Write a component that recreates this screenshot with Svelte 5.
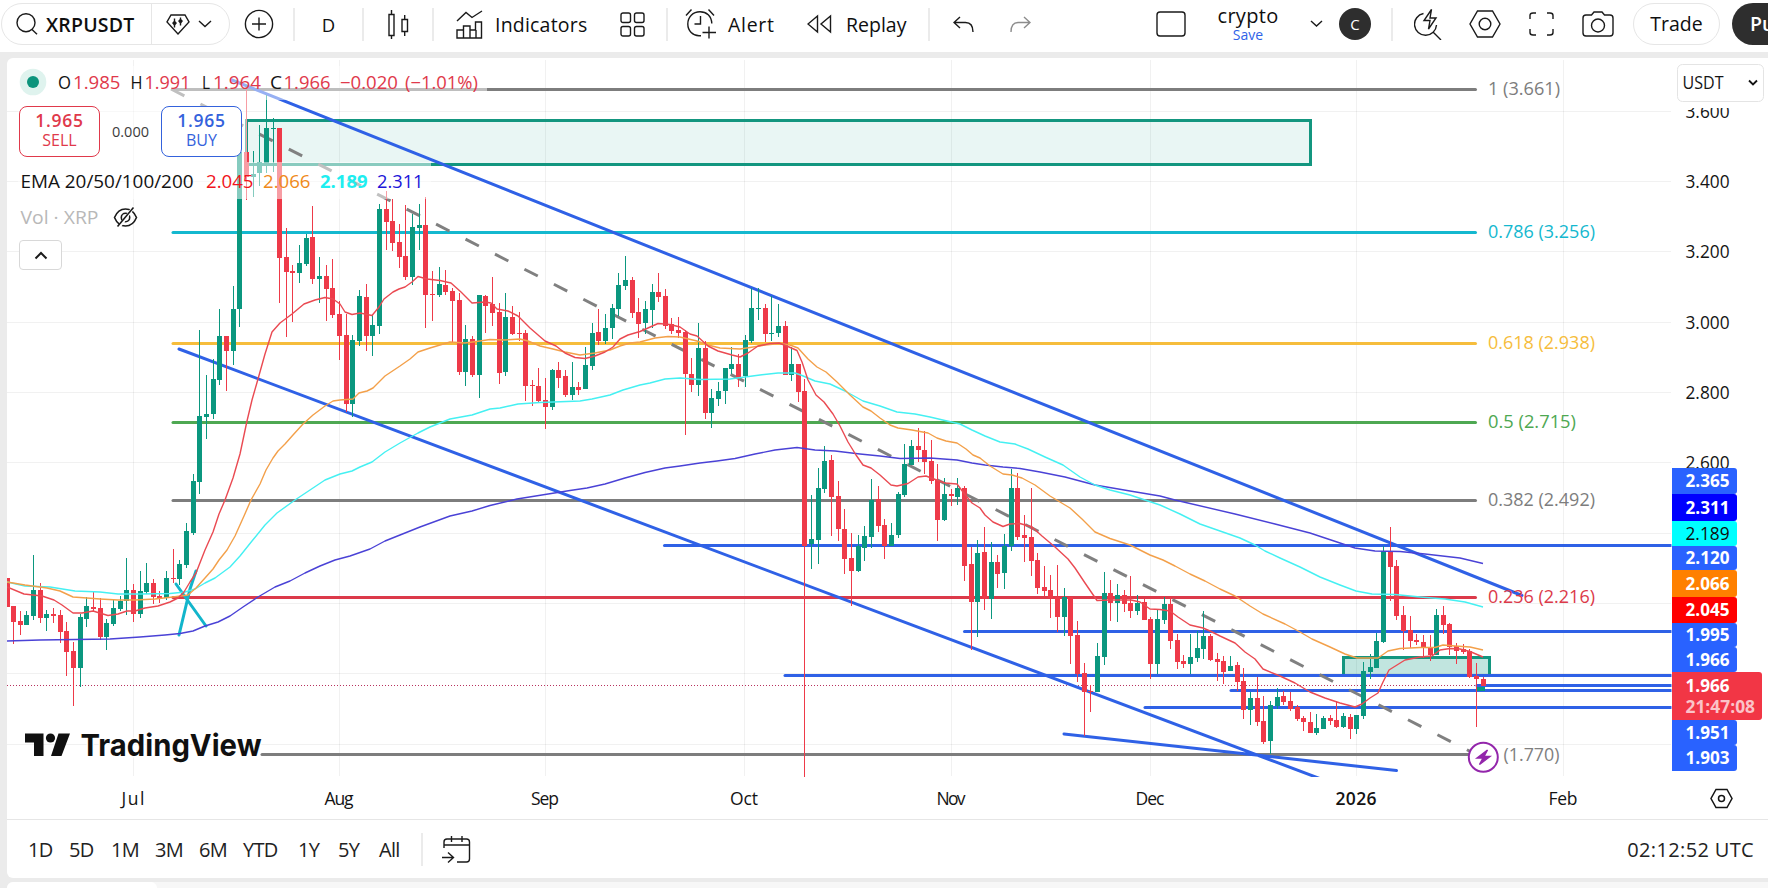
<script>
  const dayWidth = 6.6495;
  const firstDay = 7.02;

  // one entry per day: direction, high, body top, body bottom, low
  const series = `
    r578,578,607,607 r606,606,622,644 r611,621,625,635 g611,615,625,625 g555,590,616,620 r583,590,618,623 g610,614,618,631
    r608,614,616,623 r610,615,632,643 r622,631,652,676 r642,651,668,706 g614,617,668,687 g597,606,619,627 r592,607,609,612
    r598,608,637,640 g619,623,637,650 g600,608,624,626 g596,601,609,611 g558,590,601,615 r584,590,614,622 g571,591,614,618
    g563,583,592,594 r579,583,597,604 r591,596,598,603 g571,578,598,600 r549,578,579,583 g560,564,579,585 g523,531,565,568
    g474,481,533,535 g330,416,482,494 g375,414,417,439 g359,379,414,419 g309,336,380,385 r336,336,351,391 g286,309,351,365
    g152,152,309,327 r90,152,177,200 g151,174,177,197 g125,162,173,186 g95,128,163,173 g118,128,129,172 r128,128,258,303
    r228,257,272,337 r265,271,273,322 g245,263,273,283 g234,238,264,266 r206,237,279,284 g257,276,279,303 r265,276,289,321
    r259,288,315,318 r301,314,336,360 r314,335,404,412 g335,340,404,417 g290,296,341,346 r284,297,336,351 g315,325,336,356
    g204,209,326,334 r191,209,222,250 r199,221,243,251 r224,242,257,268 r205,256,277,280 g214,227,277,285 g204,225,228,250
    r197,225,295,328 r271,294,295,321 g267,284,295,297 r270,285,292,295 r288,291,301,343 r293,300,372,375 g325,339,372,386
    r336,339,375,377 g295,295,375,398 r295,296,306,333 r277,304,313,326 r303,312,373,384 g293,317,372,376 r306,317,334,335
    r312,333,334,341 r330,333,386,401 r380,385,386,406 r368,386,401,402 r378,400,407,429 g369,370,407,410 r362,370,378,388
    r370,376,395,397 g362,387,395,400 r382,387,390,395 g347,365,389,389 g323,333,366,370 r309,332,341,345 g314,328,341,344
    g304,308,328,339 g273,285,309,316 g256,280,286,290 r277,280,313,318 r298,312,324,338 g301,309,323,334 g284,292,310,328
    r273,292,297,302 r289,296,326,329 r318,324,331,334 r317,330,333,338 r330,332,374,435 r358,374,385,392 g323,348,385,396
    r341,348,413,419 g389,398,413,428 g382,391,399,406 g368,368,391,404 g347,364,369,374 r354,364,377,387 g335,340,376,387
    g288,308,341,343 g288,308,309,320 r304,308,334,342 g296,333,334,341 g304,326,333,337 r321,326,375,375 g347,364,375,381
    r364,364,392,402 r379,391,546,777 g495,539,544,569 g468,488,540,564 g446,461,489,493 r455,460,497,536 r481,496,529,541
    r509,529,559,574 r533,558,571,606 g535,546,571,572 g526,536,548,561 g479,500,537,548 r486,499,526,532 r519,525,546,559
    g523,535,546,546 g492,494,535,538 g444,464,495,497 g440,446,465,465 r428,446,450,462 r431,450,462,474 r440,461,481,484
    r464,480,520,541 g478,494,520,521 r489,494,496,506 g478,488,497,505 r486,488,566,581 r547,564,602,650 g540,553,602,637
    r527,552,599,610 g542,562,599,619 r555,562,574,588 g534,546,573,589 g469,488,546,551 r473,488,537,540 r515,535,538,562
    r488,537,561,576 r553,560,588,594 r566,587,591,596 r575,590,598,618 r565,597,617,632 g588,597,617,636 r597,597,636,664
    r621,635,674,682 r663,673,692,736 r685,691,692,712 g643,656,692,692 g572,593,657,665 r580,593,603,621 g584,595,603,622
    r590,595,604,612 r576,603,611,618 g595,603,611,615 r599,602,620,620 r617,619,664,679 g609,619,664,674 g597,604,620,624
    r597,604,641,649 r634,640,662,669 r655,661,664,668 g634,657,664,674 g631,648,658,662 g611,636,649,659 r634,636,660,661
    r653,659,662,681 r656,661,672,684 g656,666,671,671 r662,665,682,691 r668,681,710,719 g692,698,710,725 r677,698,722,726
    r696,721,742,744 g701,705,741,754 g688,697,706,709 r691,696,702,705 r692,701,709,711 r705,707,719,721 r716,718,722,731
    r712,722,733,733 g714,728,733,735 g716,718,729,729 r715,718,721,725 r701,720,727,728 g713,716,727,728 r714,717,729,739
    g715,715,729,734 g662,671,716,719 g654,667,672,679 g633,641,668,668 g546,551,642,643 r527,551,567,601 r560,566,616,620
    r606,615,631,650 r616,630,641,648 r634,640,642,645 r635,642,648,658 r635,647,655,661 g609,615,655,655 r606,615,625,634
    r623,624,647,655 r643,646,651,664 r644,649,652,654 r649,651,677,678 r663,676,679,727 r677,679,686,686`;

  const candles = series.trim().split(/\s+/).map((entry, i) => {
    const [high, top, bottom, low] = entry.slice(1).split(',').map(Number);
    return { up: entry[0] === 'g', x: Math.floor(firstDay + i * dayWidth), high, top, bottom, low };
  });

  const averages = [
    { color: '#4a42d6', points: '7,641 40,640 75,639.5 110,639 140,637 165,635 180,633.5 193,631 205,626 218,622 230,616 243,607 258,597 275,587 290,581 305,573 320,566 335,560 350,556 370,549 385,541 400,535 420,527 450,516 472,511 490,505.5 517,499 545,494.5 570,490.5 587,488 605,484 625,478 645,472.5 665,468 680,466 700,463 717,461 735,458.5 755,454 775,450 797,447.5 815,450 835,451 860,454 880,456 900,458.5 930,458 957,460 972,463 985,465 1003,467 1020,468.5 1040,472 1065,477 1095,485 1130,491 1160,496 1175,500 1235,514 1275,524 1310,533 1355,548 1375,551 1400,551.5 1425,554 1460,558 1483,563.5' },
    { color: '#45f0f2', points: '7,582 25,586 50,587 75,591 100,592 118,594 140,594 170,593.5 185,592 195,589 205,583 215,578 230,567 240,556 252,541 265,525 277,513 295,500 310,490 325,480 340,474 352,471 360,467 372,462 385,452 400,443 418,433 430,427 450,419 472,415 490,409 500,408 518,404 540,402.5 580,401 592,399 610,395 623,390 640,385 650,383 665,379 680,378 700,379.5 730,379 745,377 760,375 778,373 795,373 802,375.5 815,381 830,384 845,391 863,401 880,406 897,412 915,414 930,417 947,421 960,424 972,430 985,436 1000,442 1015,444 1028,449 1045,457 1063,465 1080,477 1095,485 1110,490 1130,495 1145,500 1160,505 1180,514 1200,524 1220,531 1240,538 1255,545 1265,551 1280,558 1300,567 1320,577 1340,585 1356,591 1372,594 1395,594.5 1420,597 1445,599 1465,602 1483,607' },
    { color: '#f3a04a', points: '7,582 25,585 47,588 60,591 73,597 87,598 100,599 118,600 135,600 155,599 173,597 188,595 196,588 205,578 213,569 219,560 227,550 235,536 244,516 251,500 260,484 266,470 273,458 278,451 285,444 293,435 303,424 313,415 325,406 333,401 340,400 353,399 359,393 367,391 373,388 385,376 400,366 410,359 418,352 430,348 450,342 465,343 480,341 490,339.5 505,340 520,339 528,341 540,346 553,349 565,352 580,355 595,353 610,350 620,346 630,343 640,342 655,338 668,336.5 680,337 697,341 708,345 720,348 740,349 750,347.5 765,345 780,343.5 790,345 798,348 808,359 817,367 826,372 837,382 850,395 863,407 871,411 880,418 890,425 898,428 912,430 928,433 937,438 946,441 957,443 966,449 973,455 980,458 990,466 1003,474 1012,475 1022,478 1035,485 1050,496 1070,508 1082,519 1095,532 1110,538.5 1130,545 1150,555 1163,560 1175,566 1190,574 1205,581 1220,589 1235,596 1250,606 1263,614 1285,624 1300,632 1312,639 1330,647 1345,654 1357,658 1378,658 1388,651 1400,648.5 1420,647.5 1435,647.5 1443,645 1455,646 1470,647 1483,650' },
    { color: '#ea4a52', points: '7,587 24,594 42,596 54,600 62,605 73,613 82,613 93,611 108,615.5 118,614 127,611 135,611 145,608 158,606 170,602 178,598 184,592 190,582 196,573 205,550 213,532 219,514 225,500 233,478 240,454 247,421 252,400 258,379 265,354 272,332 280,323 292,314 304,304 315,300 325,297.5 333,299 340,304 345,312 352,314.5 360,313 372,315.5 379,307 384,299 393,292 399,289 405,287 412,282 418,276.5 427,279 440,280.5 451,283 461,292 472,303 485,302 491,303 497,309 508,311 518,316 530,328 545,341 556,346 565,353 575,357.5 585,358.5 595,356 605,352 613,347 620,339 628,335 640,331.5 648,328 658,323.5 670,324.5 680,327 690,334 697,336 708,346 718,351 732,355 740,357 748,353 758,346 770,343.5 779,343 788,346.5 797,350.5 802,362 808,380 816,395 824,402 833,414 840,426 848,442 856,455 863,465 871,468 880,475 891,485 897,486 908,483.5 918,477 926,476 934,479 945,483 957,484 963,492 972,503 980,508 985,515 993,522 1003,526.5 1010,524 1020,523.5 1032,527 1042,536 1055,547 1068,559 1075,568 1085,583 1097,600.5 1110,600 1131,600 1140,602 1150,609 1160,609.5 1170,611 1178,617 1190,625 1203,628 1210,631 1220,636 1235,643 1245,652 1255,659 1263,669 1280,676 1295,683 1310,692 1325,698 1340,703 1355,707 1362,704 1370,698 1378,693 1383,682 1389,670 1397,665 1405,660 1420,657 1432,656 1440,650 1450,648.5 1460,649 1470,651.5 1483,657' }
  ];

  const fibs = [
    { y: 89.5, x: 173, label: '1 (3.661)', color: '#7d7d7d', width: 72 },
    { y: 232.5, x: 173, label: '0.786 (3.256)', color: '#14b8cf', width: 107 },
    { y: 343.5, x: 173, label: '0.618 (2.938)', color: '#f6bd3c', width: 107 },
    { y: 422.5, x: 173, label: '0.5 (2.715)', color: '#4ea852', width: 88 },
    { y: 500.5, x: 173, label: '0.382 (2.492)', color: '#7d7d7d', width: 107 },
    { y: 597.5, x: 173, label: '0.236 (2.216)', color: '#dc3a4a', width: 107 },
    { y: 754.5, x: 262, label: '', color: '#7d7d7d', width: 0 }
  ];

  const levels = [
    [664.5, 545.5], [964.5, 631.5], [785, 675.5], [1477, 685.5], [1231, 690.5], [1145, 707.5]
  ];

  const months = [
    { x: 133.5, label: 'Jul', width: 23 },
    { x: 339.5, label: 'Aug', width: 29 },
    { x: 545.5, label: 'Sep', width: 28 },
    { x: 744.5, label: 'Oct', width: 28 },
    { x: 951.5, label: 'Nov', width: 29 },
    { x: 1150.5, label: 'Dec', width: 29 },
    { x: 1356.5, label: '2026', width: 41, strong: true },
    { x: 1563.5, label: 'Feb', width: 29 }
  ];

  const gridRows = [111.5, 181.5, 251.5, 322.5, 392.5, 462.5, 533.5, 603.5, 673.5, 744.5];
  const axisPrices = ['3.600', '3.400', '3.200', '3.000', '2.800', '2.600'];

  const tags = [
    { y: 468, h: 26, label: '2.365', bg: '#2962ff' },
    { y: 494, h: 27, label: '2.311', bg: '#0000ff' },
    { y: 521, h: 25, label: '2.189', bg: '#00ffff', fg: '#0f0f0f' },
    { y: 546, h: 24, label: '2.120', bg: '#2962ff' },
    { y: 570, h: 27, label: '2.066', bg: '#ff8000' },
    { y: 597, h: 26, label: '2.045', bg: '#ff0000' },
    { y: 623, h: 24, label: '1.995', bg: '#2962ff' },
    { y: 647, h: 25, label: '1.966', bg: '#2962ff' },
    { y: 720, h: 25, label: '1.951', bg: '#2962ff' },
    { y: 745, h: 26, label: '1.903', bg: '#2962ff' }
  ];

  // text, x, width, baseline, colour, weight
  const legend = [
    ['O', 58, 13, 88.5, '#131313'], ['1.985', 73, 47.5, 88.5, '#e0394b'],
    ['H', 130.5, 12, 88.5, '#131313'], ['1.991', 144.5, 46, 88.5, '#e0394b'],
    ['L', 202, 8, 88.5, '#131313'], ['1.964', 213, 48, 88.5, '#e0394b'],
    ['C', 270, 12, 88.5, '#131313'], ['1.966', 283.5, 47, 88.5, '#e0394b'],
    ['−0.020', 340, 58, 88.5, '#e0394b'], ['(−1.01%)', 405, 73, 88.5, '#e0394b'],
    ['EMA 20/50/100/200', 20.5, 173, 188, '#131313'],
    ['2.045', 206, 47.5, 188, '#f0141c', 500], ['2.066', 263, 47.5, 188, '#ef8a1a', 500],
    ['2.189', 320, 47.5, 188, '#1eeef0', 700], ['2.311', 377, 46.5, 188, '#2014d8'],
    ['Vol · XRP', 20.5, 78, 224, '#b8b8b8']
  ];

  const ranges = [
    ['1D', 23], ['5D', 24], ['1M', 26], ['3M', 26], ['6M', 26], ['YTD', 37], ['1Y', 22], ['5Y', 23], ['All', 24]
  ];
</script>

<div class="app">
  <header class="toolbar">
    <div class="symbol">
      <div class="symbol-search">
        <svg width="22" height="22"><circle cx="10" cy="9.7" r="9" /><path d="M16 16.5l5 4.8" /></svg>
        <span>XRPUSDT</span>
      </div>
      <div class="symbol-broker">
        <svg width="24" height="21"><path d="M5 1h14l4 7-11 12L1 8zM8.5 4.5v9M14.5 3.500v8" /><path class="solid" d="M8.5 6.500l2.500 2.500-2.500 3L6 9zM14.500 4.500L17 7l-2.500 3L12 7z" /></svg>
        <svg width="14" height="8"><path d="M1 1l6 5.500L13 1" /></svg>
      </div>
    </div>
    <div class="cell add">
      <svg width="30" height="30"><circle cx="15" cy="15" r="13.600" /><path d="M15 8.500v13M8 15h14" /></svg>
    </div>
    <i class="sep"></i>
    <div class="cell interval">D</div>
    <i class="sep"></i>
    <div class="cell style">
      <svg width="21" height="31"><path d="M1 5.500h5v21H1zM3.500 1v4.500M3.500 26.500V30M14 10.500h5.500v12H14zM16.700 6v4.500M16.700 22.500V27" /></svg>
    </div>
    <i class="sep"></i>
    <div class="cell indicators">
      <svg width="27" height="29"><path d="M1 11l9-8.500 6 5L26 1M1 28V20h6.500v8zM7.500 28V16H14v12M14 28v-8h5.500V12H25.500v16zM7.500 28H20v-8" /></svg>
      <span>Indicators</span>
    </div>
    <div class="cell layouts">
      <svg width="25" height="25"><rect x="1" y="1" width="9.500" height="9.500" rx="2" /><rect x="14.500" y="1" width="9.500" height="9.500" rx="2" /><rect x="1" y="14.500" width="9.500" height="9.500" rx="2" /><rect x="14.500" y="14.500" width="9.500" height="9.500" rx="2" /></svg>
    </div>
    <i class="sep"></i>
    <div class="cell alert">
      <svg width="32" height="32"><path d="M26.800 15.500C26.500 8 21.500 3.700 15 3.700 8 3.700 2.800 9 2.800 16S8 27.800 14 27.800h2M1 7.500l5.500-6M23.500 1.500l5.500 6M15.500 8v8h-6M24 18.500v12M17.500 24.500h13.500" /></svg>
      <span>Alert</span>
    </div>
    <div class="cell replay">
      <svg width="25" height="20"><path d="M10.500 2v16L1 10zM23.500 2v16L14 10z" /></svg>
      <span>Replay</span>
    </div>
    <i class="sep"></i>
    <div class="cell undo">
      <svg width="22" height="17"><path d="M7 1L1 6.500 7 12M1 6.500h11.500q7.500 0 7.500 9.500" /></svg>
    </div>
    <div class="cell redo">
      <svg width="22" height="17"><path d="M15 1l6 5.500L15 12M21 6.500H9.500Q2 6.500 2 16" /></svg>
    </div>

    <svg class="frame" width="30" height="26"><rect x="1" y="1" width="28" height="24" rx="3" /></svg>
    <div class="layout-name">
      <span class="name">crypto</span>
      <span class="save">Save</span>
    </div>
    <svg class="caret" width="13" height="8"><path d="M1 1l5.500 5L12 1" /></svg>
    <div class="avatar">C</div>
    <i class="sep right"></i>
    <svg class="quick" width="28" height="32"><path d="M9.500 5.500A11 11 0 1 0 22.500 17M19 24l8 8M17.500 1.500L10 12.500h6L14.500 21l7.500-11h-6z" /></svg>
    <svg class="hex" width="32" height="28"><path d="M8.500 1h15L31 14l-7.500 13h-15L1 14z" /><circle cx="16" cy="14" r="5.800" /></svg>
    <svg class="full" width="25" height="24"><path d="M1 7V3.500Q1 1 4 1h3M18 1h3q3 0 3 2.500V7M24 17v3.500q0 2.500-3 2.500h-3M7 23H4q-3 0-3-2.500V17" /></svg>
    <svg class="camera" width="32" height="26"><path d="M4 4h5.500L12 1h8l2.500 3H28q3 0 3 3v15q0 3-3 3H4q-3 0-3-3V7q0-3 3-3z" /><circle cx="16" cy="14.500" r="6.500" /></svg>
    <div class="trade">Trade</div>
    <div class="publish">Publish</div>
  </header>

  <main class="card">
    <div class="pane">
      <svg class="chart" width="1761" height="761" viewBox="7 58 1761 761">
        <defs>
          <clipPath id="plot"><rect x="7" y="58" width="1664.500" height="719" /></clipPath>
        </defs>

        {#each gridRows as y}
          <path class="grid" d="M7 {y}H1671" />
        {/each}
        {#each months as month}
          <path class="grid" d="M{month.x} 60V776" />
        {/each}

        <g clip-path="url(#plot)">
          <rect class="zone light" x="246.500" y="120.500" width="1064" height="44" />
          <rect class="zone" x="1343.500" y="657.500" width="146" height="18" />
          <path class="last-price" d="M7 685.500H1671" />

          {#each fibs as fib}
            <path class="fib" stroke={fib.color} d="M{fib.x} {fib.y}H1475.500" />
          {/each}
          {#each levels as [x, y]}
            <path class="drawing" d="M{x} {y}H1671" />
          {/each}
          <path class="drawing" d="M232 80L1522 595.500M179 349L1325 780.500M1064 734L1396.500 770.500" />
          <path class="brush" d="M176 584l8.500 12 21.500 30M196 571l-6 18-11 46" />
          <path class="trend" d="M171 89L1483 758" />
          <rect x="1476" y="687" width="9" height="4" fill="#089981" />

          {#each candles as c}
            <g fill={c.up ? '#0b977f' : '#ee3a49'}>
              <rect x={c.x} y={c.high} width="1" height={c.low - c.high} />
              <rect x={c.x - 2} y={c.top} width="5" height={Math.max(1, c.bottom - c.top)} />
            </g>
          {/each}
          {#each averages as line}
            <polyline class="average" stroke={line.color} points={line.points} />
          {/each}
        </g>

        <rect class="veil" x="18" y="66" width="469" height="34" />
        <rect class="veil" x="18" y="100" width="229" height="62" />
        <rect class="veil" x="18" y="162" width="413" height="37" />

        {#each fibs as fib}
          {#if fib.label}
            <text x="1488" y={fib.y + 5.5} fill={fib.color} textLength={fib.width} lengthAdjust="spacingAndGlyphs">{fib.label}</text>
          {/if}
        {/each}
        <text x="1503.500" y="760.500" fill="#808080" textLength="56" lengthAdjust="spacingAndGlyphs">(1.770)</text>
        <circle class="event" cx="1483.300" cy="757.300" r="14.500" />
        <path d="M1487.500 750l-10.500 8h6l-3.500 6.500 10.500-8h-6z" fill="#9326ab" stroke="#9326ab" />

        <circle cx="33" cy="82" r="13.300" fill="#dff3ee" />
        <circle cx="33" cy="82" r="6" fill="#0c947c" />
        {#each legend as [label, x, width, y, color, weight]}
          <text {x} {y} fill={color} font-weight={weight ?? 400} textLength={width} lengthAdjust="spacingAndGlyphs">{label}</text>
        {/each}
        <g class="eye">
          <path d="M114.500 217.500Q118 209 125.500 209t11 8.500Q133 226 125.500 226t-11-8.500z" />
          <circle cx="125.500" cy="217.500" r="4.200" />
          <path class="gap" d="M118 228.500L134 206.500" />
          <path d="M117.500 226.500L133.500 207.500" />
        </g>

        <g class="logo">
          <path d="M25 733.500h18.500V756H34v-13.500h-9zM58.500 733.500H70L61.500 756H51z" />
          <circle cx="50.500" cy="738" r="4.600" />
          <text x="80.500" y="756" textLength="181" lengthAdjust="spacingAndGlyphs">TradingView</text>
        </g>

        {#each axisPrices as price, i}
          <text class="axis" x="1685.500" y={gridRows[i] + 6} textLength="44" lengthAdjust="spacingAndGlyphs">{price}</text>
        {/each}
        <rect x="1677" y="58" width="90" height="50" fill="#fff" />
        <rect class="unit" x="1677.500" y="64.500" width="86" height="37" rx="5" />
        <text class="axis" x="1682.500" y="88.500" textLength="41" lengthAdjust="spacingAndGlyphs">USDT</text>
        <path class="chevron" d="M1749 80.500l4 4 4-4" />

        {#each tags as tag}
          <path d="M1672 {tag.y}h62q3 0 3 3v{tag.h - 6}q0 3-3 3h-62z" fill={tag.bg} />
          <text x="1685.500" y={tag.y + tag.h / 2 + 6} fill={tag.fg ?? '#fff'} font-weight={tag.fg ? 400 : 700} textLength="44" lengthAdjust="spacingAndGlyphs">{tag.label}</text>
        {/each}
        <path d="M1672 672h87q3 0 3 3v42q0 3-3 3h-87z" fill="#f23645" />
        <text x="1685.500" y="692" fill="#fff" font-weight="700" textLength="44" lengthAdjust="spacingAndGlyphs">1.966</text>
        <text x="1685.500" y="713" fill="#fbc3c8" font-weight="700" textLength="69.500" lengthAdjust="spacingAndGlyphs">21:47:08</text>

        {#each months as month}
          <text class="axis" x={month.x - month.width / 2 - 0.5} y="804.500" font-weight={month.strong ? 600 : 400} textLength={month.width}>{month.label}</text>
        {/each}
        <g class="settings">
          <path d="M1716 789.500h11l5 9-5 9h-11l-5-9z" />
          <circle cx="1721.500" cy="798.500" r="3" />
        </g>
      </svg>

      <div class="overlay">
        <div class="order">
          <button class="sell"><b>1.965</b><span>SELL</span></button>
          <span class="spread">0.000</span>
          <button class="buy"><b>1.965</b><span>BUY</span></button>
        </div>
        <button class="collapse" aria-label="Collapse"><svg width="14" height="9"><path d="M1.500 7.500L7 2l5.500 5.500" /></svg></button>
      </div>
    </div>

    <footer class="ranges">
      {#each ranges as [label, width]}
        <span class="range" style="width: {width}px">{label}</span>
      {/each}
      <i class="sep"></i>
      <svg class="goto" width="30" height="29"><path d="M3 13V7q0-3 3-3h19.500q3 0 3 3v17q0 3-3 3H16M3 10h25.500M10.500 1v6M21 1v6M1 22.500h11M7 17.500l5.500 5L7 27.500" /></svg>
      <span class="clock">02:12:52 UTC</span>
    </footer>
  </main>

  <div class="panel-tabs"><div class="tab"></div></div>
</div>

<style>
  :global(body) {
    background: #ebebeb;
    overflow: hidden;
  }

  .app {
    width: 1768px;
    height: 888px;
    overflow: hidden;
    display: flex;
    flex-direction: column;
    font-family: "Trebuchet MS", "Open Sans", "Noto Sans", sans-serif;
    color: #0f0f0f;
  }

  svg {
    display: block;
    flex: none;
    fill: none;
    stroke: #1a1a1a;
    stroke-width: 1.4;
  }

  .solid {
    fill: #1a1a1a;
    stroke: none;
  }

  .toolbar {
    display: flex;
    align-items: center;
    height: 52px;
    padding-bottom: 4px;
    box-sizing: border-box;
    background: #fff;
    margin-bottom: 6px;
    font-size: 19.5px;
    flex: none;
  }

  .toolbar > * {
    flex: none;
  }

  .symbol {
    display: flex;
    width: 229px;
    height: 42px;
    margin-left: 1px;
    border: 1px solid #e6e6e6;
    border-radius: 21px;
    box-sizing: border-box;
    font-weight: 600;
  }

  .symbol-search {
    display: flex;
    align-items: center;
    gap: 8px;
    width: 150px;
    padding-left: 14px;
    box-sizing: border-box;
    border-right: 1px solid #e6e6e6;
  }

  .symbol-search span {
    font-size: 19.5px;
    letter-spacing: 0.2px;
  }

  .symbol-broker {
    display: flex;
    align-items: center;
    gap: 8px;
    padding-left: 14px;
  }

  .cell {
    display: flex;
    align-items: center;
    justify-content: center;
  }

  .sep {
    width: 2px;
    height: 33px;
    background: #ebebeb;
  }

  .add { width: 57px; margin-right: 6px; }
  .interval { width: 67px; font-size: 18.5px; }
  .style { width: 68px; }
  .layouts { width: 68px; }
  .undo { width: 67px; }
  .redo { width: 46px; }

  .redo svg {
    stroke: #8c8c8c;
  }

  .indicators {
    width: 164px;
    justify-content: flex-start;
    padding-left: 22px;
    gap: 12px;
    box-sizing: border-box;
    letter-spacing: 0.2px;
  }

  .alert {
    width: 121px;
    justify-content: flex-start;
    padding-left: 17px;
    gap: 11px;
    box-sizing: border-box;
    letter-spacing: 0.7px;
  }

  .replay {
    width: 139px;
    justify-content: flex-start;
    padding-left: 18px;
    gap: 14px;
    box-sizing: border-box;
  }

  .frame {
    margin-left: 113px;
  }

  .layout-name {
    display: flex;
    flex-direction: column;
    align-items: center;
    width: 124px;
    padding-top: 2px;
  }

  .name {
    font-size: 20px;
    line-height: 20px;
    letter-spacing: 0.3px;
  }

  .save {
    font-size: 14px;
    line-height: 18px;
    color: #2f62e8;
  }

  .avatar {
    width: 32px;
    height: 32px;
    margin-left: 16px;
    border-radius: 50%;
    background: #2e2e2e;
    color: #fff;
    font-size: 15px;
    line-height: 32px;
    text-align: center;
  }

  .sep.right { margin-left: 20px; }
  .quick { margin-left: 21px; }
  .hex { margin-left: 27px; }
  .full { margin-left: 28px; }
  .camera { margin-left: 28px; }

  .trade {
    width: 87px;
    height: 42px;
    margin-left: 19px;
    border: 1px solid #e6e6e6;
    border-radius: 21px;
    box-sizing: border-box;
    line-height: 39px;
    text-align: center;
  }

  .publish {
    width: 130px;
    height: 42px;
    margin-left: 12px;
    padding-left: 18px;
    border-radius: 21px;
    box-sizing: border-box;
    background: #2e2e2e;
    color: #fff;
    font-weight: 600;
    line-height: 41px;
  }

  .card {
    height: 820px;
    margin-left: 7px;
    border-radius: 6px 0 0 6px;
    background: #fff;
    overflow: hidden;
    flex: none;
  }

  .pane {
    position: relative;
    height: 761px;
    border-bottom: 1px solid #e6e6e6;
  }

  .chart {
    font-size: 17.5px;
    stroke: none;
  }

  .grid {
    stroke: rgba(20, 20, 20, 0.06);
    stroke-width: 1;
  }

  .zone {
    fill: rgba(8, 153, 129, 0.25);
    stroke: #13967f;
    stroke-width: 3;
  }

  .zone.light {
    fill: rgba(8, 153, 129, 0.09);
  }

  .last-price {
    stroke: #b8325e;
    stroke-width: 1;
    stroke-dasharray: 1 2;
  }

  .fib,
  .drawing,
  .brush {
    stroke-width: 3;
    stroke-linecap: round;
  }

  .drawing {
    stroke: #2f61e6;
  }

  .brush {
    stroke: #12b5cb;
  }

  .trend {
    stroke: #808080;
    stroke-width: 3;
    stroke-dasharray: 15 18.06;
  }

  .average {
    stroke-width: 1.4;
    stroke-linejoin: round;
  }

  .veil {
    fill: rgba(255, 255, 255, 0.5);
  }

  .event {
    fill: #fff;
    stroke: #9326ab;
    stroke-width: 2;
  }

  .eye path,
  .eye circle {
    stroke: #1a1a1a;
    stroke-width: 1.6;
  }

  .eye .gap {
    stroke: #fff;
    stroke-width: 3;
  }

  .logo path,
  .logo circle {
    fill: #101010;
  }

  .logo text {
    font-family: Inter, sans-serif;
    font-size: 30.5px;
    font-weight: 700;
    fill: #101010;
    stroke: #fff;
    stroke-width: 3;
    paint-order: stroke;
  }

  .axis {
    fill: #141414;
  }

  .unit {
    fill: #fff;
    stroke: #e4e4e4;
    stroke-width: 1;
  }

  .chevron {
    stroke: #141414;
    stroke-width: 1.8;
  }

  .settings {
    stroke: #141414;
    stroke-width: 1.5;
  }

  .overlay {
    position: absolute;
    left: 12px;
    top: 48px;
    display: flex;
    flex-direction: column;
    align-items: flex-start;
    gap: 83px;
  }

  .order {
    display: flex;
    align-items: center;
  }

  .overlay button {
    background: #fff;
    box-sizing: border-box;
    font-family: inherit;
  }

  .sell,
  .buy {
    display: flex;
    flex-direction: column;
    align-items: center;
    justify-content: center;
    width: 81px;
    height: 51px;
    padding: 0 0 3px;
    border: 1px solid;
    border-radius: 8px;
    line-height: 20px;
    font-size: 16px;
  }

  .sell b,
  .buy b {
    font-size: 17.5px;
    font-weight: 600;
    letter-spacing: 0.7px;
  }

  .sell {
    color: #e0394b;
  }

  .buy {
    color: #3462dc;
  }

  .spread {
    width: 61px;
    text-align: center;
    font-size: 14.5px;
    color: #3c3c3c;
  }

  .collapse {
    display: flex;
    align-items: center;
    justify-content: center;
    width: 43px;
    height: 30px;
    padding: 0;
    border: 1px solid #d8d8d8;
    border-radius: 4px;
  }

  .collapse svg {
    stroke-width: 2;
  }

  .ranges {
    display: flex;
    align-items: center;
    height: 58px;
    padding-left: 21px;
    padding-right: 14px;
    font-size: 20px;
    color: #222;
  }

  .range {
    margin-right: 18px;
    white-space: nowrap;
    letter-spacing: -0.7px;
  }

  .ranges .sep {
    margin-right: 18px;
  }

  .clock {
    margin-left: auto;
    letter-spacing: 0.35px;
  }

  .panel-tabs {
    height: 8px;
    margin: 4px 0 0 7px;
    border-radius: 6px 0 0 0;
    background: #f7f7f7;
  }

  .tab {
    width: 150px;
    height: 8px;
    border-radius: 6px 6px 0 0;
    background: #fff;
  }
</style>
